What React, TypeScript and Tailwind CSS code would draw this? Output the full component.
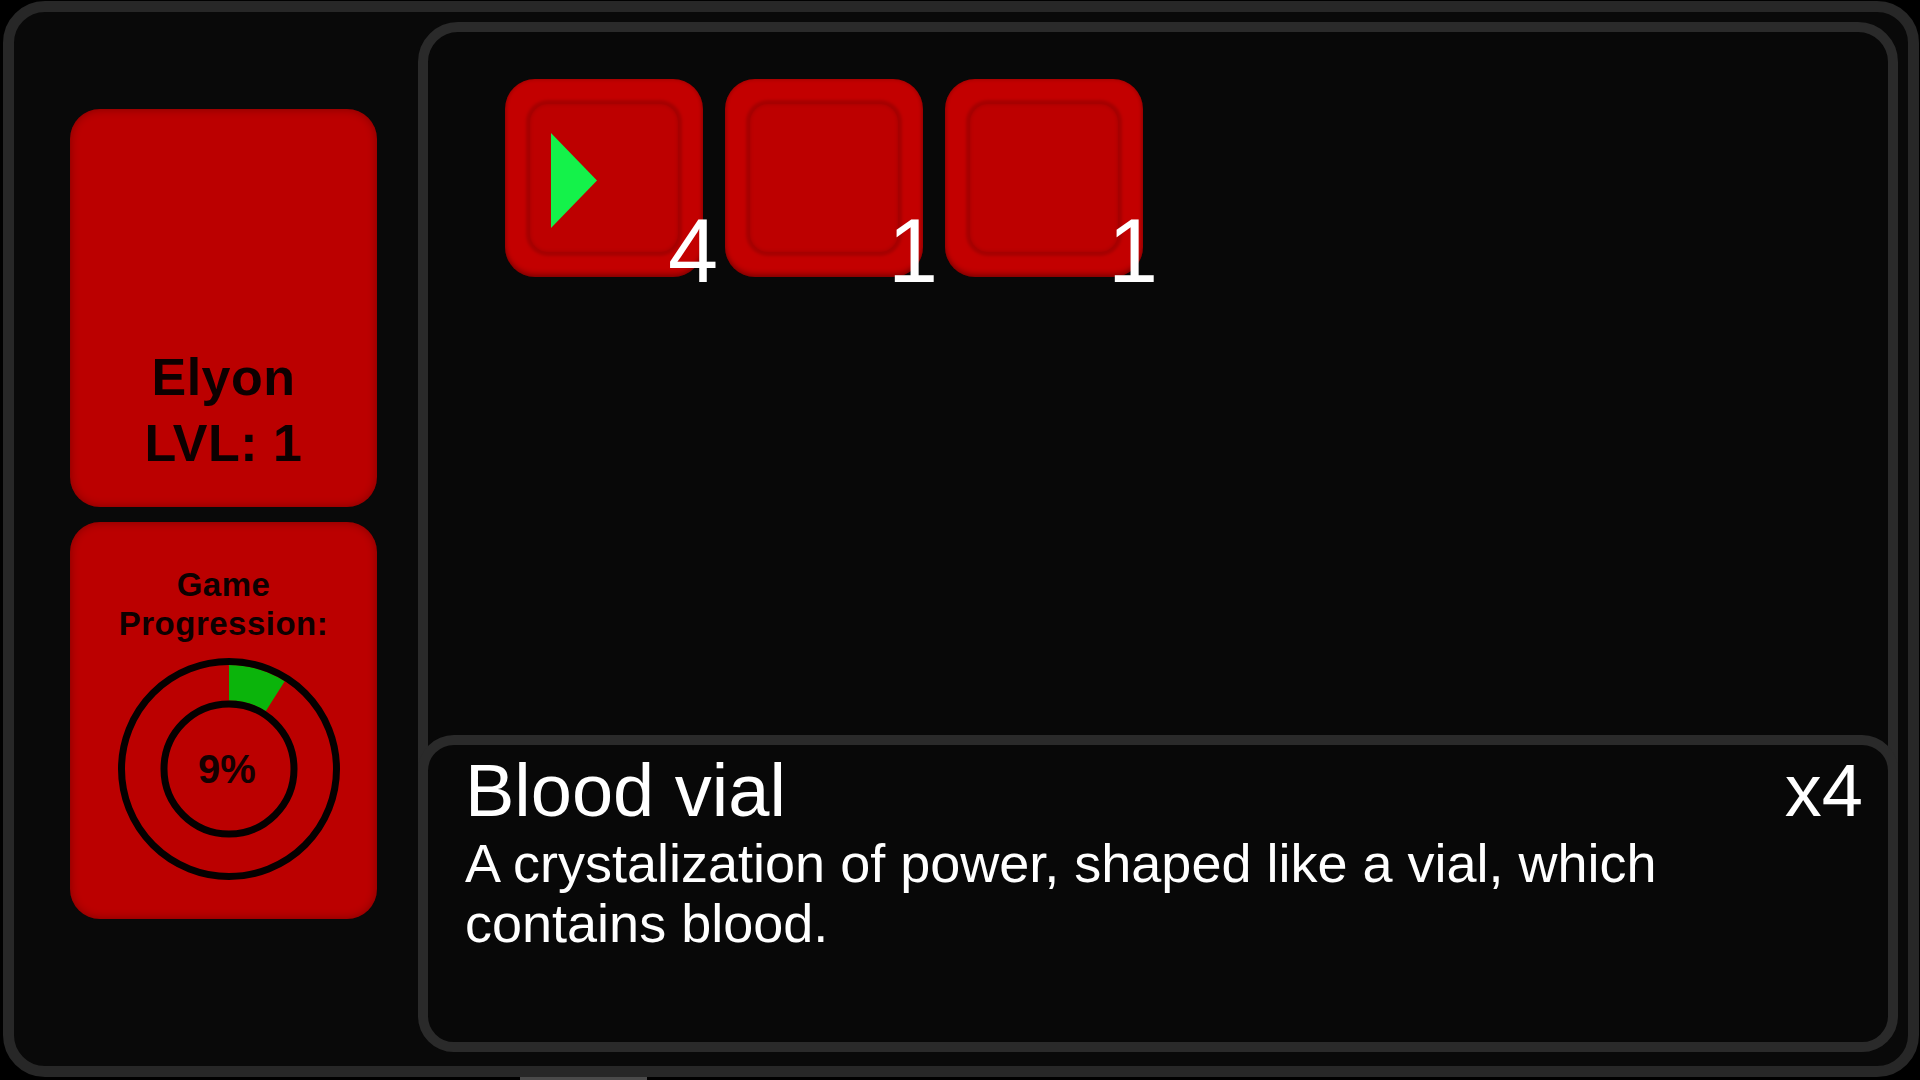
import React from 'react';

type Slot = { id: number; count: number; icon?: 'play' };

const slots: Slot[] = [
  { id: 1, count: 4, icon: 'play' },
  { id: 2, count: 1 },
  { id: 3, count: 1 },
];

const font = { fontFamily: '"Liberation Sans", Arial, sans-serif' };

const ProgressRing: React.FC<{ percent: number }> = ({ percent }) => {
  const c = 115;
  const rOut = 104;
  const rIn = 68.5;
  const a = (percent / 100) * Math.PI * 2;
  const sx = Math.sin(a);
  const cy = Math.cos(a);
  const wedge = `M ${c} ${c - rOut} A ${rOut} ${rOut} 0 0 1 ${c + rOut * sx} ${c - rOut * cy} L ${c + rIn * sx} ${c - rIn * cy} A ${rIn} ${rIn} 0 0 0 ${c} ${c - rIn} Z`;
  return (
    <svg width="230" height="230" viewBox="0 0 230 230">
      <path d={wedge} fill="#0bb40b" />
      <circle cx={c} cy={c} r="107.5" fill="none" stroke="#050000" strokeWidth="7" />
      <circle cx={c} cy={c} r="65" fill="none" stroke="#050000" strokeWidth="7" />
      <text
        x={c - 2}
        y={c + 14}
        textAnchor="middle"
        fontFamily='"Liberation Sans", Arial, sans-serif'
        fontWeight="700"
        fontSize="40"
        fill="#140000"
      >
        {percent}%
      </text>
    </svg>
  );
};

const InventorySlot: React.FC<{ slot: Slot }> = ({ slot }) => (
  <div className="relative w-[198px] h-[198px] rounded-[30px] bg-[#c30000] p-[25px] shadow-[inset_0_-4px_5px_rgba(0,0,0,0.22),inset_0_0_4px_rgba(0,0,0,0.25)]">
    <div className="w-full h-full rounded-[18px] bg-[#bd0000] shadow-[0_0_3px_4px_#a60000,inset_0_0_4px_rgba(0,0,0,0.15)]">
      {slot.icon === 'play' && (
        <svg width="46" height="95" viewBox="0 0 46 95" className="ml-[21px] pt-[29px] box-content">
          <polygon points="0,0 46,47.5 0,95" fill="#14f24a" />
        </svg>
      )}
    </div>
    <span className="absolute left-[163px] bottom-[-19px] text-[90px] leading-none text-white" style={font}>
      {slot.count}
    </span>
  </div>
);

export default function App() {
  return (
    <div className="w-[1920px] h-[1080px] bg-black overflow-hidden flex flex-col" style={font}>
      <div className="ml-[3px] mt-[1px] w-[1916px] h-[1076px] shrink-0 rounded-[42px] border-[11px] border-[#272727] bg-[#090909] flex">
        {/* Left column */}
        <div className="pl-[56px] pt-[97px] w-[363px] shrink-0 flex flex-col gap-[15px]">
          <div className="h-[398px] rounded-[30px] bg-[#bb0000] shadow-[inset_0_0_10px_rgba(0,0,0,0.32)] flex flex-col justify-end items-center pb-[31px] text-[52px] leading-[66px] font-bold tracking-[0.5px] text-[#0d0000]">
            <div>Elyon</div>
            <div>LVL: 1</div>
          </div>
          <div className="h-[397px] rounded-[30px] bg-[#bb0000] shadow-[inset_0_0_10px_rgba(0,0,0,0.32)] flex flex-col items-center pt-[43px]">
            <div className="text-[33px] leading-[39px] font-bold tracking-[0.5px] text-[#0d0000] text-center">
              <div>Game</div>
              <div>Progression:</div>
            </div>
            <div className="mt-[11px] ml-[10px]">
              <ProgressRing percent={9} />
            </div>
          </div>
        </div>

        {/* Right panel */}
        <div className="ml-[41px] mt-[10px] mb-[14px] w-[1480px] rounded-[40px] border-[10px] border-[#2a2a2a] bg-[#080808] flex flex-col">
          <div className="flex gap-[22px] pl-[77px] pt-[47px]">
            {slots.map((s) => (
              <InventorySlot key={s.id} slot={s} />
            ))}
          </div>
          <div className="flex-1" />
          <div className="-mx-[10px] -mb-[10px] h-[317px] rounded-[36px] border-[10px] border-[#2a2a2a] bg-[#080808] pl-[37px] pr-[25px] pt-[9px] text-white">
            <div className="flex justify-between text-[74px] leading-none">
              <span>Blood vial</span>
              <span>x4</span>
            </div>
            <p className="mt-[5px] w-[1250px] text-[54px] leading-[60px]">
              A crystalization of power, shaped like a vial, which contains blood.
            </p>
          </div>
        </div>
      </div>
      <div className="ml-[520px] w-[127px] h-[3px] bg-[#4a4a4a]" />
    </div>
  );
}
